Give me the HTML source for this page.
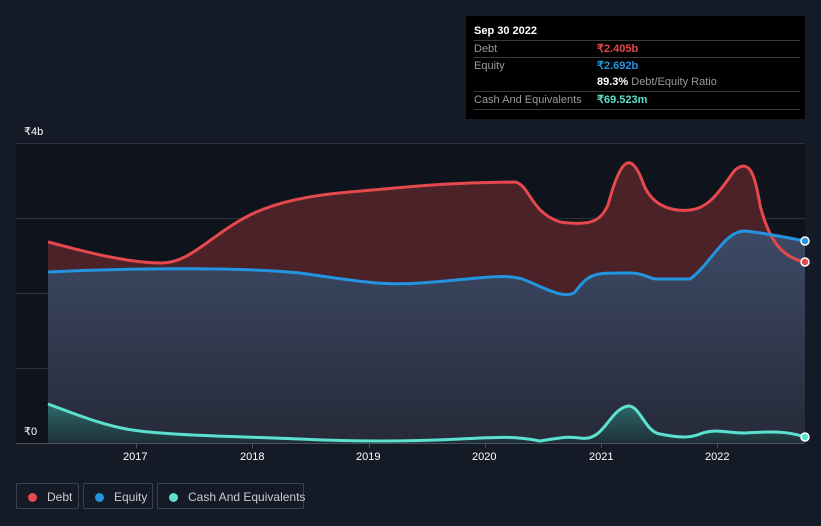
<!DOCTYPE html><html><head><style>
body{margin:0;width:821px;height:526px;background:#151b26;font-family:"Liberation Sans",sans-serif;position:relative;overflow:hidden}
.tt{position:absolute;left:466px;top:16px;width:339px;height:103px;background:#000;color:#fff;font-size:11px}
.row{position:absolute;left:8px;width:326px;border-top:1px solid #3a3a3a;height:17px;line-height:17px}
.l{color:#9a9a9a;position:absolute;left:0}.v{position:absolute;left:123px;font-weight:bold}
.leg{position:absolute;top:483px;height:26px;border:1px solid #3a404c;border-radius:2px;color:#c9ccd2;font-size:12px;line-height:26px;box-sizing:border-box;white-space:nowrap}
.dot{display:inline-block;width:9px;height:9px;border-radius:50%;margin:0 10px 0 11px;vertical-align:-1px}
.ax{position:absolute;color:#fff;font-size:11px}
</style></head><body>
<svg width="821" height="526" style="position:absolute;left:0;top:0">
<defs>
<linearGradient id="e" x1="0" y1="0" x2="0" y2="1"><stop offset="0" stop-color="#3d4a66"/><stop offset="1" stop-color="#262a38"/></linearGradient>
<linearGradient id="c" x1="0" y1="0" x2="0" y2="1"><stop offset="0" stop-color="#2e6a6a"/><stop offset="1" stop-color="#1e3038"/></linearGradient>
</defs>
<rect x="16" y="143" width="789" height="300" fill="#0f141c"/>
<g stroke="#2d323c" stroke-width="1"><line x1="16" y1="143.5" x2="805" y2="143.5"/><line x1="16" y1="218.5" x2="805" y2="218.5"/><line x1="16" y1="293.5" x2="805" y2="293.5"/><line x1="16" y1="368.5" x2="805" y2="368.5"/></g>
<path d="M48,242 C80,250 120,262 160,263 C190,264 210,235 250,215 C270,205 300,196 350,192 C400,188 430,183 515,182 C530,185 530,212 560,222 C590,226 600,222 608,205 C620,160 630,150 642,180 C650,205 670,212 690,210 C710,208 720,190 735,170 C750,158 755,175 760,205 C770,245 785,258 805,262 L805,443 L48,443Z" fill="#4a2228"/>
<path d="M48,272 C150,267 250,268 300,273 C350,280 380,286 420,283 C470,280 505,272 525,280 C545,288 565,300 575,292 C590,272 595,273 630,273 C645,273 650,280 660,279 L690,279 C710,265 725,230 745,231 C765,233 790,238 805,241 L805,443 L48,443Z" fill="url(#e)"/>
<path d="M48,404 C80,416 110,428 140,431 C180,436 260,437 300,439 C360,442 420,441 460,439 C500,437 515,436 540,441 C560,438 565,436 580,438 C605,442 608,410 628,406 C640,405 645,432 660,434 C680,438 690,438 700,434 C715,428 725,433 745,433 C765,432 785,430 805,437 L805,443 L48,443Z" fill="url(#c)"/>
<path d="M48,242 C80,250 120,262 160,263 C190,264 210,235 250,215 C270,205 300,196 350,192 C400,188 430,183 515,182 C530,185 530,212 560,222 C590,226 600,222 608,205 C620,160 630,150 642,180 C650,205 670,212 690,210 C710,208 720,190 735,170 C750,158 755,175 760,205 C770,245 785,258 805,262" fill="none" stroke="#e5484d" stroke-width="3"/>
<path d="M48,272 C150,267 250,268 300,273 C350,280 380,286 420,283 C470,280 505,272 525,280 C545,288 565,300 575,292 C590,272 595,273 630,273 C645,273 650,280 660,279 L690,279 C710,265 725,230 745,231 C765,233 790,238 805,241" fill="none" stroke="#2394df" stroke-width="3"/>
<path d="M48,404 C80,416 110,428 140,431 C180,436 260,437 300,439 C360,442 420,441 460,439 C500,437 515,436 540,441 C560,438 565,436 580,438 C605,442 608,410 628,406 C640,405 645,432 660,434 C680,438 690,438 700,434 C715,428 725,433 745,433 C765,432 785,430 805,437" fill="none" stroke="#5ce0cf" stroke-width="3"/>
<line x1="16" y1="443.5" x2="805" y2="443.5" stroke="#4a505c"/>
<g stroke="#4a505c"><line x1="136.5" y1="443" x2="136.5" y2="448"/><line x1="252.5" y1="443" x2="252.5" y2="448"/><line x1="369.5" y1="443" x2="369.5" y2="448"/><line x1="485.5" y1="443" x2="485.5" y2="448"/><line x1="601.5" y1="443" x2="601.5" y2="448"/><line x1="717.5" y1="443" x2="717.5" y2="448"/></g>
<circle cx="805" cy="262" r="4" fill="#e5484d" stroke="#fff" stroke-width="1.5"/>
<circle cx="805" cy="241" r="4" fill="#2394df" stroke="#fff" stroke-width="1.5"/>
<circle cx="805" cy="437" r="4" fill="#5ce0cf" stroke="#fff" stroke-width="1.5"/>
</svg>
<div class="ax" style="left:24px;top:125px">₹4b</div>
<div class="ax" style="left:24px;top:425px">₹0</div>
<div class="ax" style="left:123px;top:451px">2017</div><div class="ax" style="left:240px;top:451px">2018</div><div class="ax" style="left:356px;top:451px">2019</div><div class="ax" style="left:472px;top:451px">2020</div><div class="ax" style="left:589px;top:451px">2021</div><div class="ax" style="left:705px;top:451px">2022</div>
<div class="tt">
<div style="position:absolute;left:8px;top:9px;font-weight:bold">Sep 30 2022</div>
<div class="row" style="top:24px"><span class="l">Debt</span><span class="v" style="color:#e5484d">₹2.405b</span></div>
<div class="row" style="top:41px"><span class="l">Equity</span><span class="v" style="color:#2394df">₹2.692b</span></div>
<div class="row" style="top:58px;border-top:none"><span class="v">89.3% <span style="color:#9a9a9a;font-weight:normal">Debt/Equity Ratio</span></span></div>
<div class="row" style="top:75px;border-bottom:1px solid #3a3a3a"><span class="l">Cash And Equivalents</span><span class="v" style="color:#5ce0cf">₹69.523m</span></div>
</div>
<div class="leg" style="left:16px;width:63px"><span class="dot" style="background:#e5484d"></span>Debt</div>
<div class="leg" style="left:83px;width:70px"><span class="dot" style="background:#2394df"></span>Equity</div>
<div class="leg" style="left:157px;width:147px"><span class="dot" style="background:#5ce0cf"></span>Cash And Equivalents</div>
</body></html>
